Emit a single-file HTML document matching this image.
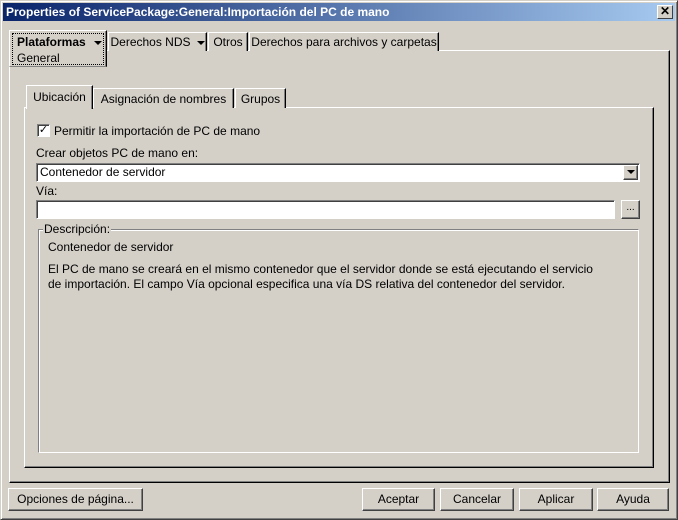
<!DOCTYPE html><html><head><style>
*{box-sizing:border-box;margin:0;padding:0}
body{width:678px;height:520px;background:#d4d0c8;font-family:"Liberation Sans",sans-serif;font-size:12px;color:#000;position:relative;overflow:hidden}
.abs{position:absolute}
.win{position:absolute;left:0;top:0;width:678px;height:520px;border:1px solid;border-color:#d4d0c8 #404040 #404040 #d4d0c8;box-shadow:inset 1px 1px #fff,inset -1px -1px #808080}
.title{left:3px;top:3px;width:672px;height:18px;background:linear-gradient(90deg,#0a246a,#a6caf0);color:#fff;font-weight:bold;font-size:12px;line-height:18px;padding-left:3px}
.x{right:5px;top:5px;width:16px;height:14px;background:#d4d0c8;border:1px solid;border-color:#fff #404040 #404040 #fff;font-size:12px;line-height:11px;text-align:center;font-weight:bold}
.panel{border:1px solid;border-color:#fff #000 #000 #fff;box-shadow:inset -1px -1px #808080}
.tab{position:absolute;border:1px solid;border-bottom:none;border-color:#fff #000 #000 #fff;box-shadow:inset -1px 0 #808080;background:#d4d0c8;padding:0;text-align:center;white-space:nowrap;line-height:16px;overflow:hidden}
.btn{position:absolute;height:23px;border:1px solid;border-color:#fff #404040 #404040 #fff;box-shadow:inset -1px -1px #808080;text-align:center;line-height:20px;background:#d4d0c8}
.sunk{border:1px solid;border-color:#808080 #fff #fff #808080;box-shadow:inset 1px 1px #404040;background:#fff}
.tri{display:inline-block;width:0;height:0;border-left:4px solid transparent;border-right:4px solid transparent;border-top:4px solid #000;vertical-align:middle;margin-left:6px}
</style></head><body>
<div class="win"></div>
<div class="abs title">Properties of ServicePackage:General:Importación del PC de mano</div>
<div class="abs x">✕</div>
<div class="abs panel" style="left:9px;top:50px;width:661px;height:433px"></div>
<div class="tab" style="left:108px;top:32px;width:99px;height:19px;padding-top:1px">Derechos NDS<span class="tri"></span></div>
<div class="tab" style="left:208px;top:32px;width:40px;height:19px;padding-top:1px">Otros</div>
<div class="tab" style="left:249px;top:32px;width:190px;height:19px;padding-top:1px">Derechos para archivos y carpetas</div>
<div class="tab" style="left:9px;top:30px;width:98px;height:37px;border-bottom:1px solid #808080;padding:2px 0 0 0;text-align:left">
<div style="margin:0 2px;border:1px dotted #000;height:32px;padding:0 4px"><b>Plataformas</b><span class="tri" style="margin-left:8px"></span><br>General</div></div>
<div class="abs panel" style="left:24px;top:107px;width:630px;height:361px"></div>
<div class="tab" style="left:93px;top:88px;width:141px;height:20px;padding-top:2px">Asignación de nombres</div>
<div class="tab" style="left:235px;top:88px;width:51px;height:20px;padding-top:2px">Grupos</div>
<div class="tab" style="left:26px;top:85px;width:67px;height:24px;padding-top:3px">Ubicación</div>
<div class="abs" style="left:37px;top:124px;width:13px;height:13px" ><div class="sunk" style="width:13px;height:13px;font-size:11px;line-height:10px;text-align:center">✓</div></div>
<div class="abs" style="left:54px;top:124px">Permitir la importación de PC de mano</div>
<div class="abs" style="left:36px;top:146px">Crear objetos PC de mano en:</div>
<div class="abs sunk" style="left:36px;top:163px;width:604px;height:19px;padding:1px 3px;line-height:15px">Contenedor de servidor
<div class="btn" style="right:1px;top:1px;width:15px;height:15px;line-height:10px"><span class="tri" style="margin:0"></span></div></div>
<div class="abs" style="left:36px;top:184px">Vía:</div>
<div class="abs sunk" style="left:36px;top:200px;width:579px;height:19px"></div>
<div class="btn" style="left:621px;top:200px;width:19px;height:19px;line-height:14px;font-size:10px">...</div>
<div class="abs" style="left:38px;top:229px;width:601px;height:224px;border:1px solid;border-color:#808080 #fff #fff #808080;box-shadow:inset 1px 1px #fff,1px 1px #808080 inset"></div>
<div class="abs" style="left:43px;top:222px;background:#d4d0c8;padding:0 1px">Descripción:</div>
<div class="abs" style="left:48px;top:240px;line-height:15px">Contenedor de servidor<div style="margin-top:7px">El PC de mano se creará en el mismo contenedor que el servidor donde se está ejecutando el servicio<br>de importación. El campo Vía opcional especifica una vía DS relativa del contenedor del servidor.</div></div>
<div class="btn" style="left:8px;top:488px;width:135px">Opciones de página...</div>
<div class="btn" style="left:362px;top:488px;width:73px">Aceptar</div>
<div class="btn" style="left:440px;top:488px;width:74px">Cancelar</div>
<div class="btn" style="left:519px;top:488px;width:74px">Aplicar</div>
<div class="btn" style="left:597px;top:488px;width:72px">Ayuda</div>
</body></html>
